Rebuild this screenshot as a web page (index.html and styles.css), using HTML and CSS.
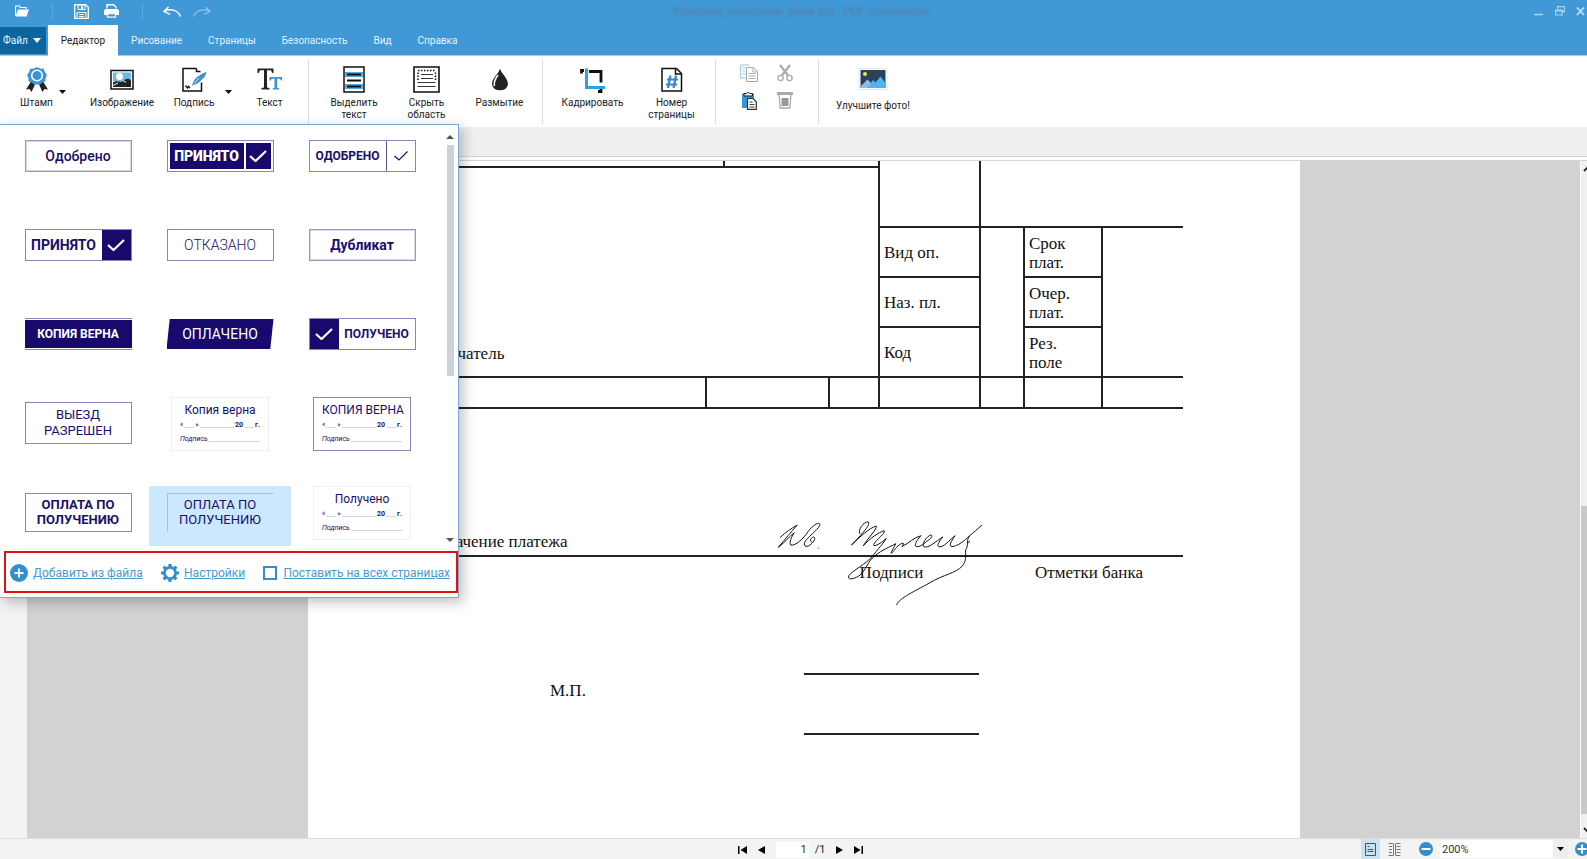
FILE: index.html
```html
<!DOCTYPE html>
<html lang="ru">
<head>
<meta charset="utf-8">
<title>PDF Commander</title>
<link rel="stylesheet" href="styles.css">
</head>
<body>
<header class="titlebar">
  <div class="quick">
    <button class="quick-btn open" aria-label="Открыть"><svg width="14" height="12" viewBox="0 0 14 12"><path d="M0.5 11V1h4l1 1.500h5.500V4" fill="none" stroke="#fff" stroke-width="1.200"/><path d="M0.500 11.500L3 4.500h11L11.500 11.500z" fill="#fff"/></svg></button>
    <span class="quick-sep"></span>
    <button class="quick-btn save" aria-label="Сохранить"><svg width="15" height="15" viewBox="0 0 15 15"><path d="M0.700 0.700h11l2.600 2.600v11h-13.600z" fill="none" stroke="#fff" stroke-width="1.300"/><path d="M4 1h7v4.500H4zM3 14V8.500h9V14" fill="none" stroke="#fff"/><path d="M7 2h2v3H7z" fill="#fff"/><path d="M5 10.500h5M5 12.500h5" stroke="#fff"/></svg></button>
    <button class="quick-btn print" aria-label="Печать"><svg width="15" height="14" viewBox="0 0 15 14"><path d="M3 4.500V0.700h6.500L12 3v1.500" fill="none" stroke="#fff" stroke-width="1.400"/><path d="M1.500 5h12L15 6.500V11h-3V9H3v2H0V6.500z" fill="#fff"/><path d="M3.500 9.500h8v3.700h-8z" fill="none" stroke="#fff" stroke-width="1.300"/></svg></button>
    <span class="quick-sep"></span>
    <button class="quick-btn undo" aria-label="Отменить"><svg width="19" height="12" viewBox="0 0 19 12"><path d="M1.500 5C8 2.500 15 4 17.500 10.500M5.500 1L1 5.300l6 3" fill="none" stroke="#fff" stroke-width="1.500"/></svg></button>
    <button class="quick-btn redo" aria-label="Повторить"><svg width="19" height="12" viewBox="0 0 19 12"><path d="M17.500 5C11 2.500 4 4 1.500 10.500M13.500 1L18 5.300l-6 3" fill="none" stroke="#8cc4ea" stroke-width="1.300"/></svg></button>
  </div>
  <span class="doc-title">Platezhka_poruchenie_blank.pdf - PDF Commander</span>
  <div class="window-btns">
    <button aria-label="Свернуть"><svg width="10" height="10" viewBox="0 0 10 10"><path d="M0 8.500h9" stroke="#a9d4f2" stroke-width="1.500"/></svg></button>
    <button aria-label="Окно"><svg width="10" height="10" viewBox="0 0 10 10"><path d="M2.500 3V0.700h7v5H7.500M0.600 4h6.500v5H0.600zM0.600 5h6.500" fill="none" stroke="#a9d4f2" stroke-width="1.200"/></svg></button>
    <button aria-label="Закрыть"><svg width="9" height="10" viewBox="0 0 9 10"><path d="M1 1.500l7 7.500M8 1.500L1 9" stroke="#c4e2f7" stroke-width="1.800"/></svg></button>
  </div>
</header>
<nav class="tabs">
  <button class="tab file">Файл <svg width="8" height="5" viewBox="0 0 8 5"><path d="M0 0h8L4 5z" fill="#fff"/></svg></button>
  <button class="tab active">Редактор</button>
  <button class="tab">Рисование</button>
  <button class="tab">Страницы</button>
  <button class="tab">Безопасность</button>
  <button class="tab">Вид</button>
  <button class="tab">Справка</button>
</nav>
<div class="ribbon">
  <div class="group insert">
    <button class="tool"><svg width="24" height="26" viewBox="0 0 24 26"><path d="M6 15l-5 8 3.500-.5L6.500 25.500 10 18zM18 15l5 8-3.500-.5-2 3L14 18z" fill="#222"/><path d="M12 .5l3.200 1.600 3.500.2 1.200 3.300 2 2.900-1.300 3-.3 3.500-3.400 1.300-2.700 2.400-2.200-1-2.200 1-2.700-2.400-3.400-1.300-.3-3.500-1.300-3 2-2.900 1.200-3.300 3.500-.2z" fill="#3c94d4"/><circle cx="12" cy="9" r="5.300" fill="none" stroke="#fff" stroke-width="1.600"/></svg><span>Штамп</span></button>
    <button class="drop" aria-label="Список штампов"><svg width="7" height="4" viewBox="0 0 7 4"><path d="M0 0h7L3.500 4z" fill="#111"/></svg></button>
    <button class="tool"><svg width="24" height="26" viewBox="0 0 24 26"><path d="M1 4h22v18.500H1z" fill="#fff" stroke="#111" stroke-width="1.500"/><path d="M3 6h18v9H3z" fill="#6db6e6"/><circle cx="9.500" cy="10" r="3.500" fill="#fff"/><path d="M3 16c4-3 6 0 9-1s5-5 9-1v6.500H3z" fill="#222"/><path d="M3 19l5-2.500M13 14l3 2" stroke="#fff"/></svg><span>Изображение</span></button>
    <button class="tool"><svg width="26" height="26" viewBox="0 0 26 26"><path d="M15.500 2H2v22.500h18.500V16M15.500 2v3h4" fill="none" stroke="#111" stroke-width="1.500"/><path d="M11.500 18.500L25 6" stroke="#222"/><path d="M11.500 18.500c1-5.500 3.500-7.500 7-9.500C21 7 23 6 25.500 6c-1.500 5-4 6.500-6.500 9-2 2-4 3-7.500 3.500z" fill="#3c94d4"/><path d="M13.500 16.500l4.500-5" stroke="#d6ecfa"/><path d="M4.500 19l2 2.500 1-1.500 1.500 1.500" fill="none" stroke="#222" stroke-width="1.500"/></svg><span>Подпись</span></button>
    <button class="drop sign" aria-label="Список подписей"><svg width="7" height="4" viewBox="0 0 7 4"><path d="M0 0h7L3.500 4z" fill="#111"/></svg></button>
    <button class="tool"><svg width="26" height="26" viewBox="0 0 26 26"><path d="M.5 2h16v4.500h-1.200L14 3.800h-4V21l2.500.6V23h-8v-1.400L7 21V3.800H3L1.700 6.500H.5z" fill="#222"/><path d="M12.500 10.500H25V14h-1l-1-1.800h-2.800v9l1.800.5v1.200h-6.300v-1.200l1.800-.5v-9h-2.800l-1 1.800h-1.200z" fill="#3c94d4"/></svg><span>Текст</span></button>
  </div>
  <div class="group hide">
    <button class="tool"><svg width="22" height="27" viewBox="0 0 22 27"><path d="M1 1h20v25H1z" fill="#fff" stroke="#111" stroke-width="1.500"/><path d="M2 6h18v5H2zM2 18h18v5H2z" fill="#56a9dc"/><path d="M4 8.500h14M4 14.500h14M4 20.500h14" stroke="#111" stroke-width="2"/></svg><span>Выделить<br>текст</span></button>
    <button class="tool"><svg width="27" height="27" viewBox="0 0 27 27"><path d="M1 1h25v25H1z" fill="#fff" stroke="#111" stroke-width="1.600"/><path d="M5 4.500h18M5 14v-9M22.500 14v-9" stroke="#111" stroke-width="1.500" stroke-dasharray="1.500 1.500"/><path d="M8 8.500h12M8 12.500h12M4.500 16.500h18M4.500 20.500h18" stroke="#333" stroke-width="1.200"/></svg><span>Скрыть<br>область</span></button>
    <button class="tool"><svg width="18" height="26" viewBox="0 0 18 26"><path d="M9 2c1 5 8 9 8 16a8.200 7.500 0 0 1-16 0C1 11 8 7 9 2z" fill="#222"/><path d="M7 8.500c-3 4-4.500 7-3.500 11" fill="none" stroke="#fff" stroke-width="1.600"/></svg><span>Размытие</span></button>
  </div>
  <div class="group crop">
    <button class="tool"><svg width="26" height="26" viewBox="0 0 26 26"><path d="M1.500 7V4H4M9 5h12v11M21 22v3h-3" fill="none" stroke="#111" stroke-width="2.800"/><path d="M6.500 2v19H25" fill="none" stroke="#2aa5dc" stroke-width="3"/></svg><span>Кадрировать</span></button>
    <button class="tool"><svg width="22" height="26" viewBox="0 0 22 26"><path d="M1 2h14.500L20.500 7v17.500H1z" fill="#fff" stroke="#111" stroke-width="1.500"/><path d="M14.500 2v5.500h6" fill="none" stroke="#111" stroke-width="1.500"/><path d="M9.500 9L7 21.500M15 9l-2.500 12.500M6 13h11M5 18h11" stroke="#3585cc" stroke-width="2.200"/></svg><span>Номер<br>страницы</span></button>
  </div>
  <div class="group clipboard">
    <button aria-label="Копировать"><svg width="18" height="18" viewBox="0 0 18 18"><path d="M9 1H.7v13H6" fill="none" stroke="#8fc9da"/><path d="M2.500 4h4M2.500 7h3M2.500 10h3" stroke="#9ad0df"/><path d="M6.500 3.500h7l4 4v10h-11z" fill="#fff" stroke="#aaa"/><path d="M13 3.500V8h4M8.500 9.500h7M8.500 12h7M8.500 14.500h7" fill="none" stroke="#aaa"/></svg></button>
    <button aria-label="Вырезать"><svg width="16" height="18" viewBox="0 0 16 18"><path d="M3 1l8.500 11M13 1L4.500 12" stroke="#aaa" stroke-width="2.200"/><circle cx="3.500" cy="14" r="2.600" fill="#fff" stroke="#aaa" stroke-width="1.400"/><circle cx="12.500" cy="14" r="2.600" fill="#fff" stroke="#aaa" stroke-width="1.400"/></svg></button>
    <button aria-label="Вставить"><svg width="16" height="19" viewBox="0 0 16 19"><path d="M1 2.500h12V17H1z" fill="#3c94d4"/><path d="M3 5V2.500h2.500a2 2 0 0 1 3.500 0h2.500V5z" fill="#dceaf3" stroke="#222"/><path d="M6.500 7.500h5.500l3.300 3.300v7.500H6.500z" fill="#fff" stroke="#333" stroke-width="1.200"/><path d="M8.500 11h3M8.500 13.500h5M8.500 16h5" stroke="#444"/></svg></button>
    <button aria-label="Удалить"><svg width="16" height="18" viewBox="0 0 16 18"><path d="M0 1h16v3H0z" fill="#aaa"/><path d="M2 4l1.200 13h9.600L14 4" fill="none" stroke="#aaa" stroke-width="1.300"/><path d="M4.500 7h7v8h-7z" fill="#999"/></svg></button>
  </div>
  <div class="group enhance">
    <button class="tool"><svg width="30" height="26" viewBox="0 0 30 26"><path d="M1 2h28v21H1z" fill="#fff" stroke="#d9eaf6"/><path d="M2.500 3.500h25v18h-25z" fill="#2b4257"/><path d="M2.500 20l7-7 5 5 1 3.500H2.500z" fill="#8fbce8"/><path d="M9 21.500l6-8 2.500 2.500 5-6 5 6.500v5z" fill="#4fb3f3"/><circle cx="7" cy="7.500" r="2" fill="#f1e05c"/></svg><span>Улучшите фото!</span></button>
  </div>

  <section class="stamp-panel" aria-label="Штампы">
    <div class="stamp-scroll">
      <div class="stamp-grid">
        <button class="cell"><span class="stamp double">Одобрено</span></button>
        <button class="cell"><span class="stamp inset"><b class="heavy">ПРИНЯТО</b><i class="tick"><svg width="18" height="12" viewBox="0 0 18 12"><path d="M1 6l5.500 5L17 1" fill="none" stroke="#fff" stroke-width="2.200"/></svg></i></span></button>
        <button class="cell"><span class="stamp split small"><b>ОДОБРЕНО</b><i class="tick line"><svg width="14" height="10" viewBox="0 0 14 10"><path d="M.5 5l4.500 4L13.500 .5" fill="none" stroke="#1a0f6b" stroke-width="1.200"/></svg></i></span></button>
        <button class="cell"><span class="stamp split"><b>ПРИНЯТО</b><i class="tick"><svg width="18" height="12" viewBox="0 0 18 12"><path d="M1 6l5.500 5L17 1" fill="none" stroke="#fff" stroke-width="2.200"/></svg></i></span></button>
        <button class="cell"><span class="stamp thin">ОТКАЗАНО</span></button>
        <button class="cell"><span class="stamp double bold">Дубликат</span></button>
        <button class="cell"><span class="stamp banner"><b>КОПИЯ ВЕРНА</b></span></button>
        <button class="cell"><span class="stamp slant">ОПЛАЧЕНО</span></button>
        <button class="cell"><span class="stamp split small"><i class="tick"><svg width="18" height="12" viewBox="0 0 18 12"><path d="M1 6l5.500 5L17 1" fill="none" stroke="#fff" stroke-width="2.200"/></svg></i><b>ПОЛУЧЕНО</b></span></button>
        <button class="cell"><span class="stamp tall">ВЫЕЗД<br>РАЗРЕШЕН</span></button>
        <button class="cell"><span class="stamp form faint"><span class="form-title">Копия верна</span><span class="form-row"><span>«</span><u class="short"></u><span>»</span><u></u><b>20</b><u class="short"></u><b>г.</b></span><span class="form-row"><em>Подпись</em><u></u></span></span></button>
        <button class="cell"><span class="stamp form"><span class="form-title">КОПИЯ ВЕРНА</span><span class="form-row"><span>«</span><u class="short"></u><span>»</span><u></u><b>20</b><u class="short"></u><b>г.</b></span><span class="form-row"><em>Подпись</em><u></u></span></span></button>
        <button class="cell"><span class="stamp tall pay bold">ОПЛАТА ПО<br>ПОЛУЧЕНИЮ</span></button>
        <button class="cell selected"><span class="stamp tall pay ghost">ОПЛАТА ПО<br>ПОЛУЧЕНИЮ</span></button>
        <button class="cell"><span class="stamp form faint"><span class="form-title">Получено</span><span class="form-row"><span>«</span><u class="short"></u><span>»</span><u></u><b>20</b><u class="short"></u><b>г.</b></span><span class="form-row"><em>Подпись</em><u></u></span></span></button>
      </div>
      <div class="panel-bar"><svg width="8" height="4" viewBox="0 0 8 4"><path d="M0 4h8L4 0z" fill="#555"/></svg><span class="panel-thumb"></span><svg width="8" height="4" viewBox="0 0 8 4"><path d="M0 0h8L4 4z" fill="#555"/></svg></div>
    </div>
    <div class="stamp-actions">
      <a class="action" href="#add"><svg width="18" height="18" viewBox="0 0 18 18"><circle cx="9" cy="9" r="9" fill="#348ecb"/><path d="M9 4.500v9M4.500 9h9" stroke="#fff" stroke-width="1.800"/></svg><span>Добавить из файла</span></a>
      <a class="action" href="#settings"><svg width="18" height="18" viewBox="0 0 18 18"><circle cx="9" cy="9" r="5.600" fill="none" stroke="#348ecb" stroke-width="2.800"/><path d="M9 0v3M9 15v3M0 9h3M15 9h3M2.600 2.600l2.200 2.200M13.200 13.200l2.200 2.200M15.400 2.600l-2.200 2.200M4.800 13.200l-2.200 2.200" stroke="#348ecb" stroke-width="3.200"/></svg><span>Настройки</span></a>
      <label class="action check" for="all-pages"><input type="checkbox" id="all-pages"><span>Поставить на всех страницах</span></label>
    </div>
  </section>
</div>
<div class="doc-strip"></div>
<main class="workspace">
  <div class="canvas">
    <article class="page">
      <table class="form-table">
        <colgroup><col><col class="c2"><col class="c3"><col class="c4"><col class="c5"><col class="c6"><col class="c7"><col class="c8"></colgroup>
        <tr class="r0"><td class="l0 nt" colspan="2"></td><td class="nt" colspan="2"></td><td class="nt" rowspan="2"></td><td class="nt nr" colspan="3" rowspan="2"></td></tr>
        <tr class="r1"><td class="payee l0" colspan="4" rowspan="4">Получатель</td></tr>
        <tr class="r2"><td>Вид оп.</td><td rowspan="3"></td><td>Срок<br>плат.</td><td class="nr" rowspan="3"></td></tr>
        <tr class="r2"><td>Наз. пл.</td><td>Очер.<br>плат.</td></tr>
        <tr class="r2"><td>Код</td><td>Рез.<br>поле</td></tr>
        <tr class="r3"><td class="l0"></td><td colspan="2"></td><td></td><td></td><td></td><td></td><td class="nr"></td></tr>
      </table>
      <p class="purpose">Назначение платежа</p>
      <div class="signing">
        <p class="mp">М.П.</p>
        <div class="signatures">
          <p>Подписи</p>
          <svg class="signature" width="213" height="90" viewBox="100 50 640 270" fill="none" stroke="#111" stroke-width="3" stroke-linecap="round" stroke-linejoin="round"><path d="M122 108C138 92 154 82 173 71C154 92 136 114 116 138C138 121 148 106 164 94C155 108 148 122 153 131C168 134 190 113 206 90C218 73 238 60 241 69C241 79 212 101 198 118C188 133 199 140 211 131C223 122 230 110 222 107C215 107 208 119 216 122M236 140l1 1"/><path d="M361 97C354 86 371 62 386 61C397 68 360 106 336 131C360 107 391 79 410 74C416 80 383 112 371 134C391 111 417 93 434 88C441 94 409 115 402 130C403 140 431 121 440 111C434 124 414 144 398 166C376 190 340 207 328 223C321 238 345 234 362 221C382 202 385 179 405 164C428 145 451 137 469 127C465 136 451 157 456 156C466 145 477 129 488 126C499 121 482 143 490 134C507 127 522 108 545 103C538 110 526 124 528 134C538 140 550 130 562 120C576 112 582 101 574 101C562 104 546 128 553 136C567 143 591 118 610 107C600 120 590 133 599 136C613 139 631 115 647 103C636 120 626 134 638 136C657 133 674 119 690 104C700 96 715 82 727 72M690 104C679 118 689 133 679 145C678 165 682 179 668 195C650 215 612 220 570 245C530 268 477 291 472 310M690 119l-2 5"/></svg>
          <span class="rule first"></span>
          <span class="rule"></span>
        </div>
        <p class="bank">Отметки банка</p>
      </div>
    </article>
  </div>
  <div class="scrollbar"><svg width="10" height="8" viewBox="0 0 10 8"><path d="M1 6l4-4 4 4" fill="none" stroke="#222" stroke-width="1.800"/></svg><span class="thumb"></span><svg width="10" height="8" viewBox="0 0 10 8"><path d="M1 2l4 4 4-4" fill="none" stroke="#222" stroke-width="1.800"/></svg></div>
</main>
<footer class="status">
  <nav class="pager">
    <button aria-label="Первая"><svg width="9" height="8" viewBox="0 0 9 8"><path d="M0 0h1.500v8H0zM9 0v8L2.500 4z"/></svg></button>
    <button aria-label="Назад"><svg width="7" height="8" viewBox="0 0 7 8"><path d="M7 0v8L0 4z"/></svg></button>
    <input class="page-no" type="text" value="1" aria-label="Страница"><span class="total">/1</span>
    <button aria-label="Вперёд"><svg width="7" height="8" viewBox="0 0 7 8"><path d="M0 0v8l7-4z"/></svg></button>
    <button aria-label="Последняя"><svg width="9" height="8" viewBox="0 0 9 8"><path d="M7.500 0H9v8H7.500zM0 0v8l6.500-4z"/></svg></button>
  </nav>
  <div class="zoom">
    <button class="view on" aria-label="Одна страница"><svg width="11" height="13" viewBox="0 0 11 13"><path d="M.5 .5h10v12H.5z" fill="none" stroke="#456" /><path d="M2.500 3.500h2M2.500 6.500h6M2.500 8.500h6" stroke="#456"/></svg></button>
    <button class="view" aria-label="Две страницы"><svg width="13" height="13" viewBox="0 0 13 13"><path d="M.5 .5h5M7.500 .5h5M1 3.500h3M8.500 3.500h4M1 6.500h3M8.500 6.500h4M1 9.500h3M8.500 9.500h4M.5 12.500h5M7.500 12.500h5M5.500 1v11M7.500 1v11" fill="none" stroke="#777"/></svg></button>
    <button class="round" aria-label="Уменьшить"><svg width="14" height="14" viewBox="0 0 14 14"><circle cx="7" cy="7" r="7" fill="#348ecb"/><path d="M2.500 7h9" stroke="#fff" stroke-width="2"/></svg></button>
    <input class="percent" type="text" value="200%" aria-label="Масштаб"><button class="pick" aria-label="Выбрать масштаб"><svg width="7" height="4" viewBox="0 0 7 4"><path d="M0 0h7L3.500 4z"/></svg></button>
    <button class="round plus" aria-label="Увеличить"><svg width="14" height="14" viewBox="0 0 14 14"><circle cx="7" cy="7" r="7" fill="#348ecb"/><path d="M2.500 7h9M7 2.500v9" stroke="#fff" stroke-width="2"/></svg></button>
  </div>
</footer>
</body>
</html>
```
FILE: styles.css
```css
* { box-sizing: border-box; }
body { margin: 0; height: 100vh; display: flex; flex-direction: column; overflow: hidden; background: #f3f3f3; font: 10px/12px Roboto, sans-serif; color: #222; }
button { border: 0; padding: 0; margin: 0; background: none; font: inherit; color: inherit; }
svg { display: block; flex: none; }
p { margin: 0; }

.titlebar { display: grid; grid-template-columns: 1fr auto 1fr; align-items: center; height: 25px; padding-bottom: 3px; background: #4098d7; }
.quick { display: flex; align-items: center; padding-left: 15px; }
.quick-sep { width: 1px; height: 16px; background: #5aaae0; }
.open { margin-right: 23px; }
.save { margin: 0 15px 0 21px; }
.print { margin-right: 23px; }
.undo { margin: 2px 10px 0 20px; }
.redo { margin-top: 2px; }
.doc-title { padding-left: 16px; font: 11px/12px "Liberation Sans", sans-serif; color: #557c9c; filter: blur(1px); }
.window-btns { display: flex; justify-content: flex-end; gap: 11px; padding-right: 2px; }

.tabs { display: flex; height: 31px; background: #4098d7; color: #e6f3fc; border-bottom: 1px solid #a3cdec; }
.tab { margin-bottom: -1px; padding: 0 13px; }
.tab.file { display: flex; align-items: center; gap: 5px; margin: 2px 2px 1px 0; padding: 0 5px 0 3px; background: #0e659e; }
.tab.active { background: #fff; color: #222; }

.ribbon { position: relative; display: flex; height: 71px; padding: 3px 0; background: #fff; }
.group { display: flex; align-items: flex-start; border-right: 1px solid #ddd; }
.group:nth-last-child(2) { border-right: 0; }
.tool { display: flex; flex-direction: column; align-items: center; gap: 4px; min-width: 0; padding-top: 7px; white-space: nowrap; }
.tool svg { height: 27px; }
.insert { display: grid; grid-template-columns: 39px 16px 100px 44px 24px 59px; padding: 0 9px 0 17px; }
.drop { display: flex; padding: 31px 0 0 3px; }
.drop.sign { padding-left: 9px; }
.hide { display: grid; grid-template-columns: 72px 73px 73px; padding: 0 6px 0 9px; }
.crop { display: grid; grid-template-columns: 79px 79px; padding: 0 4px 0 10px; }
.clipboard { display: grid; grid-template-columns: 18px 16px; align-content: start; gap: 9px 19px; padding: 5px 25px 0 24px; justify-items: center; }
.enhance { padding: 0 17px; }
.enhance .tool { gap: 7px; }

.stamp-panel { position: absolute; z-index: 2; left: 0; top: 68px; width: 459px; padding-bottom: 4px; background: #fff; border: 1px solid #7ba7d0; border-left: 0; box-shadow: 4px 4px 12px rgba(0,0,0,.25); color: #1a0f6b; }
.stamp-scroll { display: flex; height: 421px; margin-bottom: 5px; overflow: hidden; }
.stamp-grid { display: grid; grid-template-columns: repeat(3, 142px); grid-auto-rows: 89px; padding: 5px 0 0 7px; }
.cell { display: flex; align-items: flex-start; justify-content: center; }
.cell.selected { background: #cbe8fe; }
.stamp { display: flex; align-items: center; justify-content: center; width: 107px; height: 32px; margin-top: 10px; border: 1px solid #8a84b8; font-size: 14px; line-height: 16px; font-weight: 500; }
.stamp b { flex: 1; font-weight: 700; text-align: center; }
.double { border-color: #9a95c2; box-shadow: inset 0 0 0 1px #d9d7e8; }
.bold { font-weight: 700; }
.thin { font-weight: 300; }
.small { font-size: 12px; }
.inset { gap: 2px; padding: 2px; }
.inset b { background: #170a6c; color: #fff; line-height: 26px; }
.stamp .heavy { font-weight: 900; }
.tick { display: flex; align-items: center; justify-content: center; align-self: stretch; width: 29px; background: #170a6c; }
.inset .tick { width: 25px; }
.tick.line { background: none; border-left: 1px solid #5a5299; }
.banner { border-width: 1px 0; padding: 1px 0; font-size: 12px; }
.banner b { background: #170a6c; color: #fff; line-height: 28px; }
.slant { border: 0; height: 30px; margin-top: 11px; background: #170a6c; color: #fff; clip-path: polygon(3% 0, 100% 0, 97% 100%, 0 100%); font-weight: 400; }
.tall { height: 42px; margin-top: 5px; font-size: 13px; font-weight: 400; }
.pay { height: 39px; margin-top: 7px; padding-bottom: 2px; line-height: 15px; }
.pay.bold { font-weight: 700; }
.ghost { border-color: #a9c0e0 #cbe8fe #cbe8fe #a9c0e0; }
.form { display: flex; flex-direction: column; align-items: stretch; justify-content: flex-start; width: 98px; height: 54px; margin-top: 0; padding: 4px 8px; font-size: 7px; line-height: 14px; font-weight: 400; }
.form.faint { border-color: #eeeef4; }
.form-title { font-size: 12px; line-height: 16px; white-space: nowrap; }
.form-row { display: flex; align-items: center; gap: 1px; }
.form-row b { flex: none; }
.form-row u { flex: 1; height: 6px; border-bottom: 1px solid #d5d3e4; }
.form-row u.short { flex: none; width: 10px; }
.panel-bar { flex: 1; display: flex; flex-direction: column; align-items: center; gap: 6px; padding: 10px 6px 4px 13px; }
.panel-thumb { width: 7px; height: 231px; margin-bottom: auto; background: #ccd3d8; }
.stamp-actions { display: flex; align-items: center; justify-content: space-between; height: 42px; margin-left: 4px; padding: 2px 6px 0 4px; border: 2px solid #dc1414; font-size: 12px; }
.action { display: flex; align-items: center; gap: 5px; color: #4a9ad0; text-decoration: underline; line-height: 16px; white-space: nowrap; }
.check { gap: 6px; }
.check input { appearance: none; width: 14px; height: 14px; margin: 0; border: 2px solid #348ecb; background: #fff; }

.doc-strip { height: 34px; background: #fcfcfc; border-top: 29px solid #efefef; border-bottom: 1px solid #d4d4d4; box-shadow: inset 0 1px 0 #d4d4d4; }
.workspace { flex: 1; display: flex; min-height: 0; padding-left: 27px; }
.canvas { flex: 1; display: grid; grid-template-columns: 281px 1fr 280px; background: #d2d2d2; }
.page { grid-column: 2; min-width: 0; padding: 0 117px 0 112px; background: #fff; font: 17px/19px "Liberation Serif", serif; color: #111; }
.form-table { width: 100%; border-collapse: collapse; table-layout: fixed; }
.form-table td { padding: 1px 0 0 4px; border: 2px solid #222; }
.form-table td.l0 { border-left: 0; }
.form-table td.nt { border-top: 0; }
.form-table td.nr { border-right: 0; }
.c2 { width: 18px; } .c3 { width: 105px; } .c4 { width: 50px; } .c5 { width: 101px; }
.c6 { width: 44px; } .c7 { width: 78px; } .c8 { width: 81px; }
.r0 { height: 6px; } .r1 { height: 60px; } .r2 { height: 50px; } .r3 { height: 31px; }
.form-table td.payee { padding: 0 0 13px; vertical-align: bottom; }
.purpose { padding: 123px 0 4px; border-bottom: 2px solid #222; }
.signing { display: grid; grid-template-columns: 1fr 175px 204px; }
.mp { padding: 124px 0 0 130px; }
.signatures { position: relative; display: flex; flex-direction: column; text-align: center; padding-top: 6px; }
.signature { position: absolute; left: -31px; top: -39px; }
.rule { height: 60px; border-bottom: 2px solid #222; }
.rule.first { height: 93px; }
.bank { padding: 6px 0 0 16px; text-align: center; }
.scrollbar { display: flex; flex-direction: column; width: 7px; padding: 4px 0; border-left: 1px solid #fff; background: #f0f0f0; overflow: hidden; }
.scrollbar svg { margin-left: 2px; }
.thumb { flex: 0 0 46%; margin: auto 0 12px; background: #c9c9c9; }

.status { display: grid; grid-template-columns: 1fr auto 1fr; align-items: center; height: 21px; overflow: hidden; border-top: 1px solid #ddd; background: #f3f3f3; font-size: 11px; }
.pager { grid-column: 2; display: flex; align-items: center; gap: 11px; padding: 1px 0 0 14px; }
.pager input, .zoom input { border: 0; outline: 0; background: #fff; font: inherit; color: #333; }
.page-no { width: 33px; height: 16px; padding: 0 2px; text-align: right; margin-right: -5px; }
.zoom { display: flex; align-items: center; justify-content: flex-end; }
.view { display: flex; align-items: center; justify-content: center; width: 19px; height: 20px; margin-right: 5px; }
.view.on { background: #cbe2f3; }
.round { margin: 0 7px 0 10px; }
.zoom .percent { width: 113px; height: 18px; padding: 0 2px; }
.pick { display: flex; align-items: center; justify-content: center; width: 15px; height: 18px; background: #eee; }
.plus { margin: 0 -2px 0 7px; }
```
